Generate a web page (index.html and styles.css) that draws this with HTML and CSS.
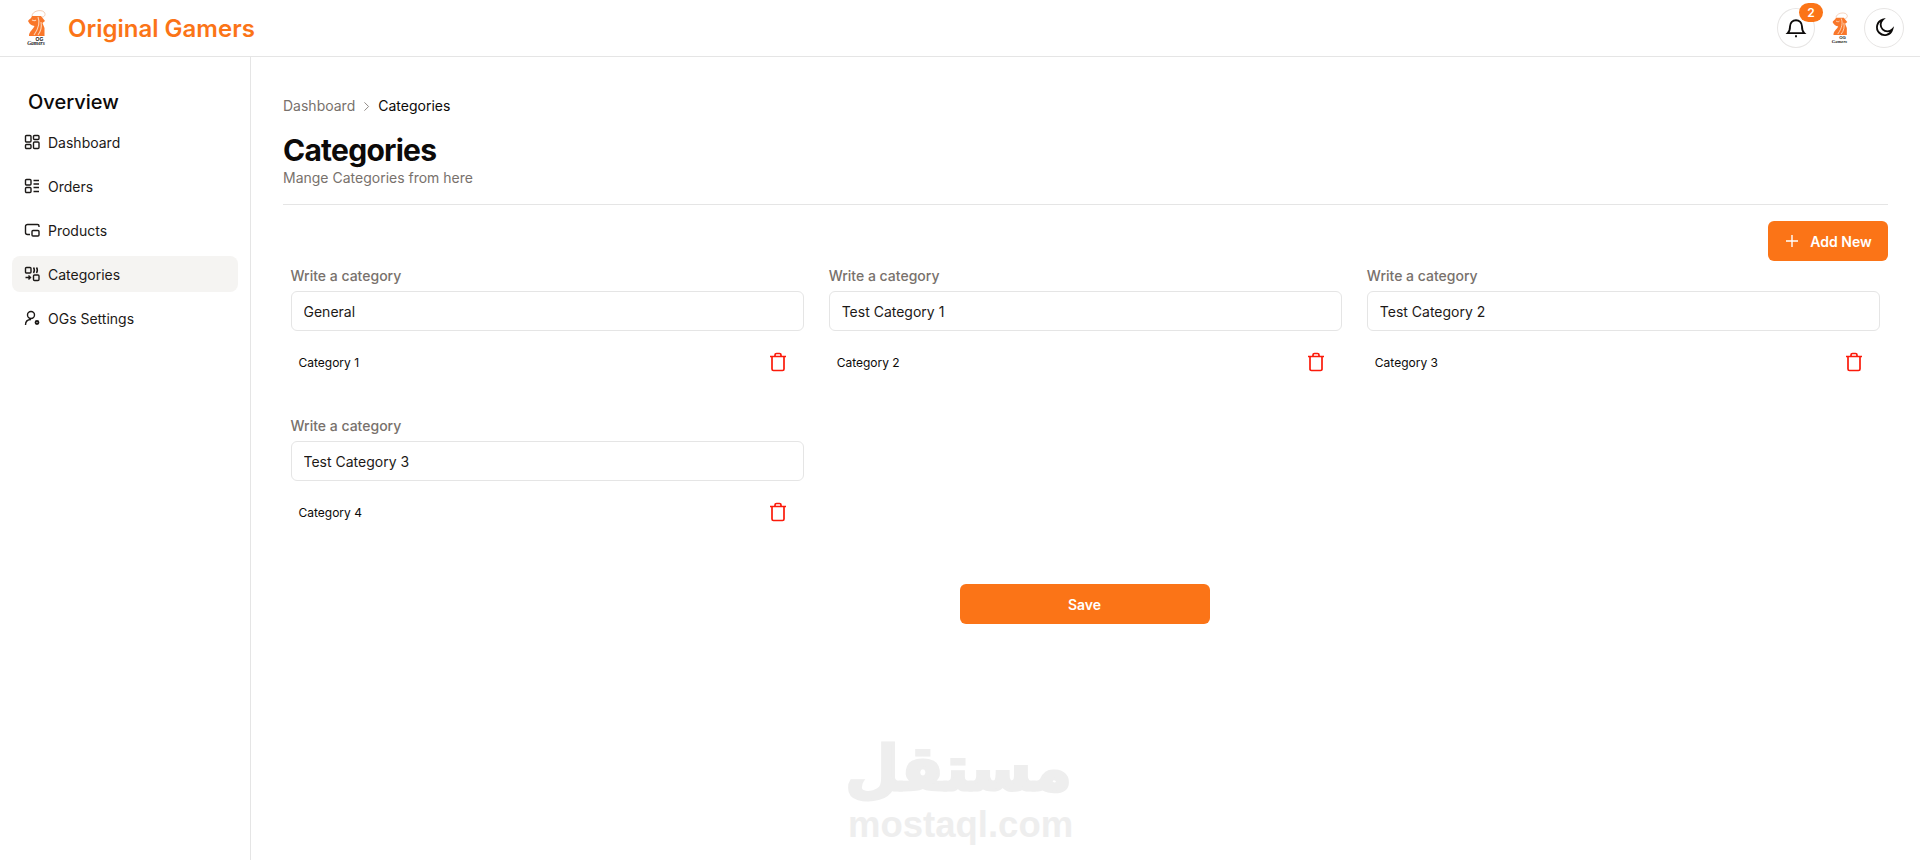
FILE: index.html
```html
<!DOCTYPE html>
<html lang="en">
<head>
    <meta charset="UTF-8">
    <meta name="viewport" content="width=device-width, initial-scale=1.0">
    <title>Categories</title>
    <link rel="stylesheet" href="styles.css">
</head>
<body>
    <svg class="sprite" xmlns="http://www.w3.org/2000/svg">
        <symbol id="og-logo" viewBox="0 0 22 36">
            <path d="M7 6 L16 6 L20 11 L17.500 13 L19.500 18 L19.500 26 L4 26 C4 21 8 20 9.500 16 C7 15.500 5 15 3 11 C4 9.500 5 9 6 8 Z" fill="#f9772a"/>
            <path d="M13 7 C15 12 14 18 9 25 M16 12 C17 17 16 21 13 25 M7 10 C9 11 10 11 11 10" fill="none" stroke="#fdd3b5" stroke-width="1.100"/>
            <path d="M7 6 C7 1 16 -1 19 2 C21 4 20 7 17 7" fill="none" stroke="#eeb896" stroke-width="0.700"/>
            <text x="14.500" y="30.500" class="logo-og">OG</text>
            <text x="11" y="35" class="logo-sub">Gamers</text>
        </symbol>
        <symbol id="trash-shape" viewBox="0 0 20 20">
            <path d="M2 4.500h16M7 4.500V3a1.500 1.500 0 0 1 1.500-1.500h3A1.500 1.500 0 0 1 13 3v1.500M4 4.500V17a1.500 1.500 0 0 0 1.500 1.500h9A1.500 1.500 0 0 0 16 17V4.500" fill="none" stroke="#fb1a0a" stroke-width="1.700"/>
        </symbol>
    </svg>

    <!-- top bar -->
    <header class="topbar">
        <div class="brand">
            <svg class="brand-logo"><use href="#og-logo"/></svg>
            <span class="brand-name">Original Gamers</span>
        </div>
        <div class="top-actions">
            <div class="round-button bell">
                <svg viewBox="0 0 24 24" class="top-icon">
                    <path d="M5.500 10a6.500 6.500 0 0 1 13 0c0 5 2.500 7.500 2.500 7.500H3S5.500 15 5.500 10z"/>
                    <path d="M11 21h2"/>
                </svg>
                <span class="badge">2</span>
            </div>
            <svg class="user-logo"><use href="#og-logo"/></svg>
            <div class="round-button">
                <svg viewBox="0 0 24 24" class="top-icon">
                    <path d="M21 13.500A8.500 8.500 0 1 1 10.500 3a7 7 0 0 0 10.500 10.500z"/>
                </svg>
            </div>
        </div>
    </header>

    <div class="page">
        <!-- sidebar -->
        <aside class="sidebar">
            <h2 class="side-title">Overview</h2>
            <nav class="side-nav">
                <a class="side-link">
                    <svg viewBox="0 0 16 16" class="side-icon">
                        <rect x="1.500" y="1.500" width="5.500" height="6.500" rx="1"/>
                        <rect x="9.500" y="1.500" width="5.500" height="4" rx="1"/>
                        <rect x="1.500" y="10.500" width="5.500" height="4" rx="1"/>
                        <rect x="9.500" y="8" width="5.500" height="6.500" rx="1"/>
                    </svg>
                    Dashboard
                </a>
                <a class="side-link">
                    <svg viewBox="0 0 16 16" class="side-icon">
                        <rect x="1.500" y="1.500" width="5.500" height="5.500" rx="1"/>
                        <rect x="1.500" y="9.500" width="5.500" height="5" rx="1"/>
                        <path d="M9.500 2.500h5.500M9.500 6h5.500M9.500 9.500h5.500M9.500 13.500h5.500"/>
                    </svg>
                    Orders
                </a>
                <a class="side-link">
                    <svg viewBox="0 0 16 16" class="side-icon">
                        <path d="M15 5V4a1.500 1.500 0 0 0-1.500-1.500h-10A2 2 0 0 0 1.500 4.500v6A2 2 0 0 0 3.500 12.500H6"/>
                        <rect x="8" y="8.500" width="7" height="5.500" rx="1"/>
                    </svg>
                    Products
                </a>
                <a class="side-link active">
                    <svg viewBox="0 0 16 16" class="side-icon">
                        <rect x="1.500" y="1.500" width="5.500" height="5.500" rx="1"/>
                        <rect x="9.500" y="9" width="5.500" height="5.500" rx="1"/>
                        <path d="M9.500 1.500c1 1.500 1 4 0 5.500M12.500 1.500c1 1.500 1 4 0 5.500"/>
                        <path d="M1.500 11.500h5M4.500 9.500l2 2-2 2"/>
                    </svg>
                    Categories
                </a>
                <a class="side-link">
                    <svg viewBox="0 0 16 16" class="side-icon">
                        <circle cx="7" cy="5" r="3.500"/>
                        <path d="M1.500 15c0-3.500 2-5.500 5.500-5.500"/>
                        <circle cx="13" cy="12.500" r="1.500" class="gear-dot"/>
                    </svg>
                    OGs Settings
                </a>
            </nav>
        </aside>

        <!-- content -->
        <main class="content">
            <div class="crumbs">
                <span class="crumb-muted">Dashboard</span>
                <svg viewBox="0 0 16 16" class="crumb-arrow"><path d="M5 2l6 6-6 6"/></svg>
                <span>Categories</span>
            </div>
            <h1 class="page-title">Categories</h1>
            <p class="page-sub">Mange Categories from here</p>
            <hr class="divider">

            <div class="toolbar">
                <button class="add-button">
                    <svg viewBox="0 0 16 16" class="plus-icon"><path d="M8 2v12M2 8h12"/></svg>
                    Add New
                </button>
            </div>

            <div class="category-grid">
                <div class="category">
                    <label class="field-label">Write a category</label>
                    <input class="field-input" type="text" value="General">
                    <div class="category-row">
                        <span>Category 1</span>
                        <svg viewBox="0 0 20 20" class="trash"><use href="#trash-shape"/></svg>
                    </div>
                </div>
                <div class="category">
                    <label class="field-label">Write a category</label>
                    <input class="field-input" type="text" value="Test Category 1">
                    <div class="category-row">
                        <span>Category 2</span>
                        <svg viewBox="0 0 20 20" class="trash"><use href="#trash-shape"/></svg>
                    </div>
                </div>
                <div class="category">
                    <label class="field-label">Write a category</label>
                    <input class="field-input" type="text" value="Test Category 2">
                    <div class="category-row">
                        <span>Category 3</span>
                        <svg viewBox="0 0 20 20" class="trash"><use href="#trash-shape"/></svg>
                    </div>
                </div>
                <div class="category">
                    <label class="field-label">Write a category</label>
                    <input class="field-input" type="text" value="Test Category 3">
                    <div class="category-row">
                        <span>Category 4</span>
                        <svg viewBox="0 0 20 20" class="trash"><use href="#trash-shape"/></svg>
                    </div>
                </div>
            </div>

            <div class="save-row">
                <button class="save-button">Save</button>
            </div>
        </main>
    </div>

    <!-- watermark over the page -->
    <div class="watermark">
        <div class="watermark-ar" lang="ar" dir="rtl">مستقل</div>
        <div class="watermark-en">mostaql.com</div>
    </div>
</body>
</html>
```

FILE: styles.css
```css
* {
    box-sizing: border-box;
}

html, body {
    height: 100%;
}

body {
    margin: 0;
    font-family: Inter, "Noto Sans", sans-serif;
    background-color: #fff;
    color: #0c0a09;
    display: flex;
    flex-direction: column;
    overflow: hidden;
}

.sprite {
    display: none;
}

.topbar {
    height: 57px;
    flex-shrink: 0;
    border-bottom: 1px solid #e5e5e5;
    display: flex;
    justify-content: space-between;
    align-items: center;
    padding: 0 16px 0 25px;
}

.brand {
    display: flex;
    align-items: center;
    gap: 21px;
}

.brand-logo {
    width: 22px;
    height: 36px;
}

.brand-name {
    font-size: 24px;
    font-weight: 600;
    color: #fb7417;
}

.logo-og {
    font-family: "Liberation Sans", sans-serif;
    font-size: 5px;
    font-weight: 700;
    fill: #111;
    text-anchor: middle;
}

.logo-sub {
    font-family: "Liberation Serif", serif;
    font-size: 5.500px;
    font-style: italic;
    font-weight: 700;
    fill: #222;
    text-anchor: middle;
}

.top-actions {
    display: flex;
    align-items: center;
    gap: 15px;
}

.round-button {
    position: relative;
    width: 40px;
    height: 40px;
    border: 1px solid #e7e5e4;
    border-radius: 50%;
    display: flex;
    justify-content: center;
    align-items: center;
}

.bell {
    width: 38px;
}

.top-icon {
    width: 22px;
    height: 22px;
    fill: none;
    stroke: #0c0a09;
    stroke-width: 2;
}

.badge {
    position: absolute;
    top: -6px;
    left: 21px;
    width: 24px;
    height: 19px;
    border-radius: 10px;
    background-color: #fb7417;
    color: #fff;
    font-size: 12px;
    font-weight: 600;
    display: flex;
    justify-content: center;
    align-items: center;
}

.user-logo {
    width: 19px;
    height: 32px;
}

.page {
    flex: 1;
    display: flex;
    min-height: 0;
}

.sidebar {
    width: 251px;
    flex-shrink: 0;
    border-right: 1px solid #e5e5e5;
    padding: 33px 12px 0;
}

.side-title {
    margin: 0 0 10px 16px;
    font-size: 20px;
    line-height: 24px;
    font-weight: 500;
}

.side-nav {
    display: flex;
    flex-direction: column;
    gap: 8px;
}

.side-link {
    height: 36px;
    display: flex;
    align-items: center;
    gap: 8px;
    padding-left: 12px;
    border-radius: 8px;
    font-size: 14px;
    color: #1c1917;
}

.side-link.active {
    background-color: #f5f4f2;
}

.side-icon {
    width: 16px;
    height: 16px;
    fill: none;
    stroke: #1c1917;
    stroke-width: 1.400;
}

.side-icon .gear-dot {
    stroke-width: 1.800;
}

.content {
    flex: 1;
    padding: 39px 32px 0;
}

.crumbs {
    display: flex;
    align-items: center;
    gap: 6px;
    font-size: 14px;
    line-height: 20px;
}

.crumb-muted {
    color: #78716c;
}

.crumb-arrow {
    width: 11px;
    height: 11px;
    fill: none;
    stroke: #78716c;
    stroke-width: 1.200;
}

.page-title {
    margin: 16px 0 0;
    font-size: 30px;
    line-height: 36px;
    font-weight: 700;
    letter-spacing: -0.75px;
}

.page-sub {
    margin: 0;
    font-size: 14px;
    line-height: 20px;
    color: #78716c;
}

.divider {
    margin: 16px 0 0;
    border: 0;
    border-top: 1px solid #e5e5e5;
}

.toolbar {
    margin-top: 16px;
    display: flex;
    justify-content: flex-end;
}

.add-button {
    width: 120px;
    height: 40px;
    border: 0;
    border-radius: 6px;
    background-color: #fb7417;
    color: #fff;
    font-family: inherit;
    font-size: 14px;
    font-weight: 600;
    display: flex;
    justify-content: center;
    align-items: center;
    gap: 10px;
}

.plus-icon {
    width: 16px;
    height: 16px;
    fill: none;
    stroke: #fff;
    stroke-width: 1.400;
}

.category-grid {
    margin: 5px 8px 0 7.500px;
    display: grid;
    grid-template-columns: repeat(3, 1fr);
    column-gap: 25px;
    row-gap: 38px;
}

.field-label {
    display: block;
    margin-bottom: 5px;
    font-size: 14px;
    line-height: 20px;
    font-weight: 500;
    color: #78716c;
}

.field-input {
    display: block;
    width: 100%;
    height: 40px;
    padding: 0 12px;
    border: 1px solid #e5e5e5;
    border-radius: 6px;
    font-family: inherit;
    font-size: 14px;
    color: #1c1917;
    outline: none;
}

.category-row {
    margin-top: 15px;
    height: 32px;
    padding: 0 16px 0 8px;
    display: flex;
    justify-content: space-between;
    align-items: center;
    font-size: 12px;
}

.trash {
    width: 20px;
    height: 20px;
}

.save-row {
    margin: 56px 2px 0 0;
    display: flex;
    justify-content: center;
}

.save-button {
    width: 250px;
    height: 40px;
    border: 0;
    border-radius: 6px;
    background-color: #fb7417;
    color: #fff;
    font-family: inherit;
    font-size: 14px;
    font-weight: 600;
}

/* watermark */
.watermark {
    position: absolute;
    left: 848px;
    top: 730px;
    width: 224px;
    text-align: center;
    white-space: nowrap;
    color: #eee;
    pointer-events: none;
}

.watermark-ar {
    font-family: "DejaVu Sans", sans-serif;
    font-size: 62px;
    line-height: 78px;
    font-weight: 700;
    -webkit-text-stroke: 3px #eee;
}

.watermark-en {
    font-family: "Liberation Sans", sans-serif;
    font-size: 36.500px;
    line-height: 34px;
    font-weight: 700;
}
```
